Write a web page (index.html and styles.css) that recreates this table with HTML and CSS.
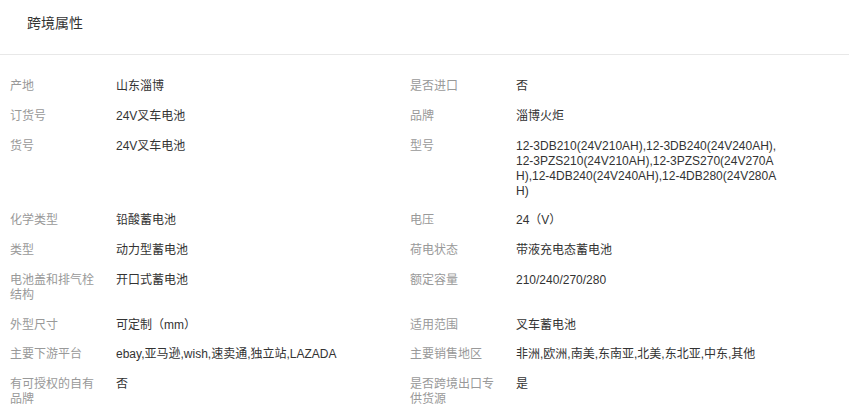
FILE: index.html
```html
<!DOCTYPE html>
<html lang="zh-CN">
<head>
    <meta charset="UTF-8">
    <meta name="viewport" content="width=device-width, initial-scale=1.0">
    <title>跨境属性</title>
    <link rel="stylesheet" href="styles.css">
</head>
<body>
    <div class="attr-panel">
        <div class="attr-title">跨境属性</div>
        <div class="attr-list">
            <div class="attr-item"><span class="attr-name">产地</span><span class="attr-value">山东淄博</span></div>
            <div class="attr-item"><span class="attr-name">是否进口</span><span class="attr-value">否</span></div>

            <div class="attr-item"><span class="attr-name">订货号</span><span class="attr-value">24V叉车电池</span></div>
            <div class="attr-item"><span class="attr-name">品牌</span><span class="attr-value">淄博火炬</span></div>

            <div class="attr-item"><span class="attr-name">货号</span><span class="attr-value">24V叉车电池</span></div>
            <div class="attr-item"><span class="attr-name">型号</span><span class="attr-value">12-3DB210(24V210AH),12-3DB240(24V240AH),12-3PZS210(24V210AH),12-3PZS270(24V270AH),12-4DB240(24V240AH),12-4DB280(24V280AH)</span></div>

            <div class="attr-item"><span class="attr-name">化学类型</span><span class="attr-value">铅酸蓄电池</span></div>
            <div class="attr-item"><span class="attr-name">电压</span><span class="attr-value">24（V）</span></div>

            <div class="attr-item"><span class="attr-name">类型</span><span class="attr-value">动力型蓄电池</span></div>
            <div class="attr-item"><span class="attr-name">荷电状态</span><span class="attr-value">带液充电态蓄电池</span></div>

            <div class="attr-item"><span class="attr-name">电池盖和排气栓结构</span><span class="attr-value">开口式蓄电池</span></div>
            <div class="attr-item"><span class="attr-name">额定容量</span><span class="attr-value">210/240/270/280</span></div>

            <div class="attr-item"><span class="attr-name">外型尺寸</span><span class="attr-value">可定制（mm）</span></div>
            <div class="attr-item"><span class="attr-name">适用范围</span><span class="attr-value">叉车蓄电池</span></div>

            <div class="attr-item"><span class="attr-name">主要下游平台</span><span class="attr-value">ebay,亚马逊,wish,速卖通,独立站,LAZADA</span></div>
            <div class="attr-item"><span class="attr-name">主要销售地区</span><span class="attr-value">非洲,欧洲,南美,东南亚,北美,东北亚,中东,其他</span></div>

            <div class="attr-item"><span class="attr-name">有可授权的自有品牌</span><span class="attr-value">否</span></div>
            <div class="attr-item"><span class="attr-name">是否跨境出口专供货源</span><span class="attr-value">是</span></div>
        </div>
    </div>
</body>
</html>
```

FILE: styles.css
```css
body {
    font-family: "Liberation Sans", Arial, "Noto Sans CJK SC", sans-serif;
    margin: 0;
    padding: 0;
    background-color: #fff;
    color: #333;
}

.attr-title {
    font-size: 14px;
    line-height: 20px;
    padding: 13px 27px 21px;
    color: #333;
    border-bottom: 1px solid #e8e8e8;
}

.attr-list {
    display: grid;
    grid-template-columns: 400px 400px;
    padding: 17px 0 0 10px;
}

.attr-item {
    display: flex;
    align-items: flex-start;
    padding: 7px 0 7.75px;
    font-size: 12px;
    line-height: 15px;
}

.attr-name {
    width: 94px;
    margin-right: 12px;
    flex-shrink: 0;
    color: #999;
}

.attr-value {
    width: 262px;
    color: #333;
    word-break: break-all;
}
```
